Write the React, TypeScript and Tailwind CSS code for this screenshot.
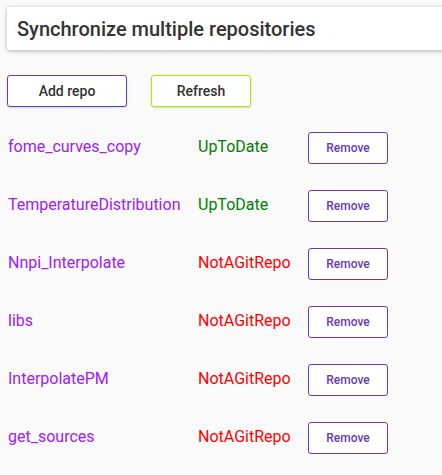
const repos = [
  { name: 'fome_curves_copy', status: 'UpToDate' },
  { name: 'TemperatureDistribution', status: 'UpToDate' },
  { name: 'Nnpi_Interpolate', status: 'NotAGitRepo' },
  { name: 'libs', status: 'NotAGitRepo' },
  { name: 'InterpolatePM', status: 'NotAGitRepo' },
  { name: 'get_sources', status: 'NotAGitRepo' },
]

export default function App() {
  return (
    <div className="min-h-[475px] overflow-hidden bg-[#fafafa] font-['Roboto',sans-serif]">
      {/* Title card */}
      <div className="ml-[7px] mt-[7px] w-[460px] h-[43px] bg-white rounded-[3px] shadow-[0_1px_4px_rgba(0,0,0,0.3)] flex items-center pl-[10px]">
        <h1 className="text-[20px] font-medium text-[#333]">Synchronize multiple repositories</h1>
      </div>

      {/* Actions */}
      <div className="flex gap-[24px] ml-[7px] mt-[25px]">
        <button className="w-[120px] h-[32px] border border-[#673ab7] rounded-[3px] bg-white text-[14px] font-medium text-[#333] shadow-[0_1px_2px_rgba(0,0,0,0.15)]">
          Add repo
        </button>
        <button className="w-[100px] h-[32px] border border-[#aeea00] rounded-[3px] bg-white text-[14px] font-medium text-[#333] shadow-[0_1px_2px_rgba(0,0,0,0.15)]">
          Refresh
        </button>
      </div>

      {/* Repo list */}
      <div className="mt-[25px] flex flex-col gap-[26px]">
        {repos.map((r) => (
          <div key={r.name} className="flex items-center h-[32px]">
            <span className="w-[198px] pl-[8px] -mt-[3px] text-[16px] text-[#a020f0]">{r.name}</span>
            <span className={`w-[110px] -mt-[3px] text-[16px] ${r.status === 'UpToDate' ? 'text-[#008000]' : 'text-[#ff0000]'}`}>
              {r.status}
            </span>
            <button className="w-[80px] h-[32px] border border-[#673ab7] rounded-[3px] bg-white text-[12px] font-medium text-[#673ab7]">
              Remove
            </button>
          </div>
        ))}
      </div>
    </div>
  )
}
